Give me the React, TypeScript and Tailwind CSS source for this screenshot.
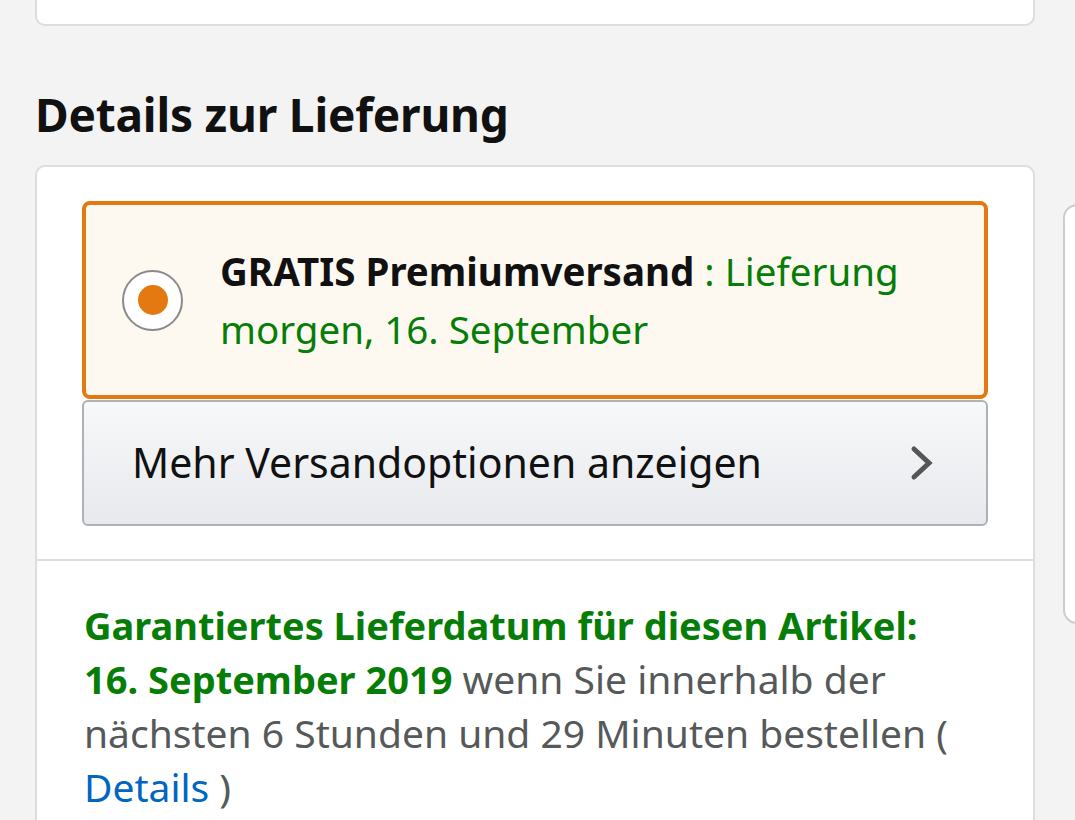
import React from "react";

export default function App() {
  return (
    <div
      className="relative w-[1075px] h-[820px] overflow-hidden bg-[#f3f3f3]"
      style={{ fontFamily: '"Noto Sans", "Open Sans", sans-serif' }}
    >
      <div className="flex">
        <div className="ml-[35px] w-[1000px] shrink-0 flex flex-col">
          {/* top card remainder */}
          <div className="h-[24px] -mt-[10px] pt-[10px] bg-white border-2 border-t-0 border-[#dddddd] rounded-b-[10px] box-content" />

          <h2 className="mt-[60px] text-[46px] leading-[56px] font-bold text-[#111111] tracking-[-0.2px]">
            Details zur Lieferung
          </h2>

          <div className="mt-[23px] bg-white border-2 border-[#dddddd] rounded-[10px] h-[700px]">
            <div className="px-[45px] pt-[34px] pb-[33px]">
              <div className="flex items-center gap-[37px] bg-[#fdf8f0] border-[4px] border-[#e47911] rounded-[8px] pl-[36px] pr-[30px] py-[37px]">
                <div className="w-[61px] h-[61px] shrink-0 rounded-full border-2 border-[#8a8a8a] bg-white flex items-center justify-center">
                  <div className="w-[30px] h-[30px] rounded-full bg-[#e47911]" />
                </div>
                <p className="text-[38.5px] leading-[58px] text-[#067d06]">
                  <span className="font-bold text-[#111111]">GRATIS Premiumversand</span> : Lieferung morgen, 16. September
                </p>
              </div>
              <div className="mt-[1px] h-[126px] flex items-center justify-between pl-[48px] pr-[48px] border-2 border-[#adb1b8] rounded-[6px] bg-gradient-to-b from-[#f7f8fa] to-[#e7e9ec]">
                <span className="text-[41px] text-[#111111]">Mehr Versandoptionen anzeigen</span>
                <svg width="28" height="36" viewBox="0 0 28 36" fill="none" className="mr-[2px]">
                  <path d="M6 4 L21 18 L6 32" stroke="#555555" strokeWidth="5" strokeLinecap="round" strokeLinejoin="miter" />
                </svg>
              </div>
            </div>
            <div className="border-t-2 border-[#dddddd] px-[47px] pt-[37px]">
              <p className="text-[39px] leading-[54px] text-[#565959]">
                <span className="text-[38px] font-bold text-[#067d06]">
                  Garantiertes Lieferdatum für diesen Artikel:
                  <br />
                  16. September 2019
                </span>{" "}
                wenn Sie innerhalb der
                <br />
                nächsten 6 Stunden und 29 Minuten bestellen (
                <br />
                <span className="text-[#0066c0]">Details</span> )
              </p>
            </div>
          </div>
        </div>
        <div className="ml-[28px] mt-[204px] w-[60px] h-[420px] shrink-0 bg-white border-2 border-[#cccccc] rounded-tl-[14px] rounded-bl-[14px]" />
      </div>
    </div>
  );
}
